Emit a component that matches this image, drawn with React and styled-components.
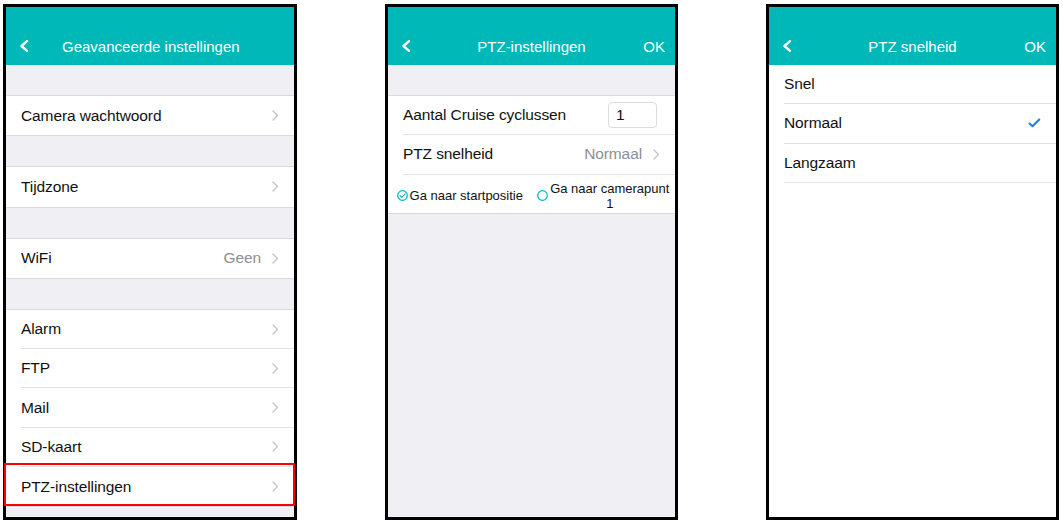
import styled, { createGlobalStyle } from "styled-components";

const GlobalStyle = createGlobalStyle`
  body {
    margin: 0;
    background: #fff;
    font-family: "Liberation Sans", Arial, sans-serif;
  }
`;

const TEAL = "#00b8b8";

const Page = styled.div`
  display: flex;
  gap: 88px;
  padding: 4px 0 0 3px;
`;

const Phone = styled.div`
  position: relative;
  box-sizing: border-box;
  width: ${(p) => p.$w || 293}px;
  height: 516px;
  border: 3px solid #000;
  background: ${(p) => (p.$white ? "#fff" : "#efeff4")};
  display: flex;
  flex-direction: column;
`;

const NavBar = styled.div`
  height: 58px;
  box-sizing: border-box;
  padding-top: 20px;
  background: ${TEAL};
  display: grid;
  grid-template-columns: 56px 1fr 56px;
  align-items: center;
  color: #fff;
  font-size: 15px;
`;

const BackIcon = styled.svg`
  margin-left: 13px;
  display: block;
`;

const Title = styled.div`
  text-align: center;
  white-space: nowrap;
`;

const Ok = styled.div`
  justify-self: end;
  margin-right: 10px;
`;

const Gap = styled.div`
  height: 30px;
`;

const RowInner = styled.div`
  height: 39.3px;
  box-sizing: border-box;
  display: flex;
  align-items: center;
  padding-right: 15px;
  border-bottom: 1px solid #e2e2e5;
  font-size: 15.5px;
  letter-spacing: -0.1px;
  color: #111;
`;

const Row = styled.div`
  position: relative;
  padding-left: 15px;
`;

const Group = styled.div`
  background: #fff;
  border-top: ${(p) => (p.$plain ? "none" : "1px solid #dadade")};
  border-bottom: ${(p) => (p.$plain ? "none" : "1px solid #dadade")};
  ${(p) =>
    !p.$plain &&
    `
    & > ${Row}:last-child ${RowInner} { border-bottom: none; }
  `}
`;

const Label = styled.span`
  flex: 1;
`;

const Value = styled.span`
  color: #8e8e93;
  margin-right: 11px;
`;

const Highlight = styled.div`
  position: absolute;
  top: -4px;
  bottom: 0;
  left: -2px;
  right: -1px;
  border: 2px solid #ff0000;
  pointer-events: none;
`;

const CountBox = styled.div`
  width: 49px;
  height: 26px;
  box-sizing: border-box;
  border: 1px solid #dcdcdc;
  border-radius: 4px;
  padding-left: 7px;
  margin-right: 3px;
  display: flex;
  align-items: center;
`;

const RadioRow = styled.div`
  height: 38.4px;
  box-sizing: border-box;
  padding-top: 4px;
  display: flex;
  align-items: center;
  font-size: 13px;
  color: #111;
`;

const RadioItem = styled.div`
  flex: 1;
  display: flex;
  align-items: center;
  justify-content: center;
  gap: 2px;
`;

const RadioText = styled.span`
  text-align: center;
  line-height: 15px;
`;

const Chevron = () => (
  <svg width="7" height="11" viewBox="0 0 7 11">
    <polyline
      points="1,1 5.5,5.5 1,10"
      fill="none"
      stroke="#c4c4c9"
      strokeWidth="1.4"
      strokeLinecap="round"
      strokeLinejoin="round"
    />
  </svg>
);

const Back = () => (
  <BackIcon width="10" height="12" viewBox="0 0 10 12">
    <polyline
      points="8,1.2 2.5,6 8,10.8"
      fill="none"
      stroke="#fff"
      strokeWidth="2.4"
      strokeLinecap="round"
      strokeLinejoin="round"
    />
  </BackIcon>
);

const Radio = ({ checked }) => (
  <svg width="11" height="11" viewBox="0 0 11 11">
    <circle cx="5.5" cy="5.5" r="4.8" fill="none" stroke={TEAL} strokeWidth="1.2" />
    {checked && (
      <polyline
        points="3,5.6 4.8,7.4 8.2,3.8"
        fill="none"
        stroke={TEAL}
        strokeWidth="1.1"
        strokeLinecap="round"
        strokeLinejoin="round"
      />
    )}
  </svg>
);

const Check = () => (
  <svg width="13" height="10" viewBox="0 0 13 10">
    <polyline
      points="1.5,5.5 4.5,8.3 11.3,1.5"
      fill="none"
      stroke="#1a7af0"
      strokeWidth="2"
      strokeLinecap="round"
      strokeLinejoin="round"
    />
  </svg>
);

const Nav = ({ title, ok }) => (
  <NavBar>
    <Back />
    <Title>{title}</Title>
    {ok ? <Ok>OK</Ok> : <span />}
  </NavBar>
);

const Item = ({ label, value, chevron = true, children, highlight }) => (
  <Row>
    <RowInner>
      <Label>{label}</Label>
      {value && <Value>{value}</Value>}
      {children}
      {chevron && <Chevron />}
    </RowInner>
    {highlight && <Highlight />}
  </Row>
);

const App = () => {
  return (
    <>
      <GlobalStyle />
      <Page>
        <Phone $w={294}>
          <Nav title="Geavanceerde instellingen" />
          <Gap />
          <Group>
            <Item label="Camera wachtwoord" />
          </Group>
          <Gap />
          <Group>
            <Item label="Tijdzone" />
          </Group>
          <Gap />
          <Group>
            <Item label="WiFi" value="Geen" />
          </Group>
          <Gap />
          <Group>
            <Item label="Alarm" />
            <Item label="FTP" />
            <Item label="Mail" />
            <Item label="SD-kaart" />
            <Item label="PTZ-instellingen" highlight />
          </Group>
        </Phone>

        <Phone>
          <Nav title="PTZ-instellingen" ok />
          <Gap />
          <Group>
            <Item label="Aantal Cruise cyclussen" chevron={false}>
              <CountBox>1</CountBox>
            </Item>
            <Item label="PTZ snelheid" value="Normaal" />
            <RadioRow>
              <RadioItem>
                <Radio checked />
                <RadioText>Ga naar startpositie</RadioText>
              </RadioItem>
              <RadioItem>
                <Radio />
                <RadioText>
                  Ga naar camerapunt
                  <br />1
                </RadioText>
              </RadioItem>
            </RadioRow>
          </Group>
        </Phone>

        <Phone $white>
          <Nav title="PTZ snelheid" ok />
          <Group $plain>
            <Item label="Snel" chevron={false} />
            <Item label="Normaal" chevron={false}>
              <Check />
            </Item>
            <Item label="Langzaam" chevron={false} />
          </Group>
        </Phone>
      </Page>
    </>
  );
};

export default App;
